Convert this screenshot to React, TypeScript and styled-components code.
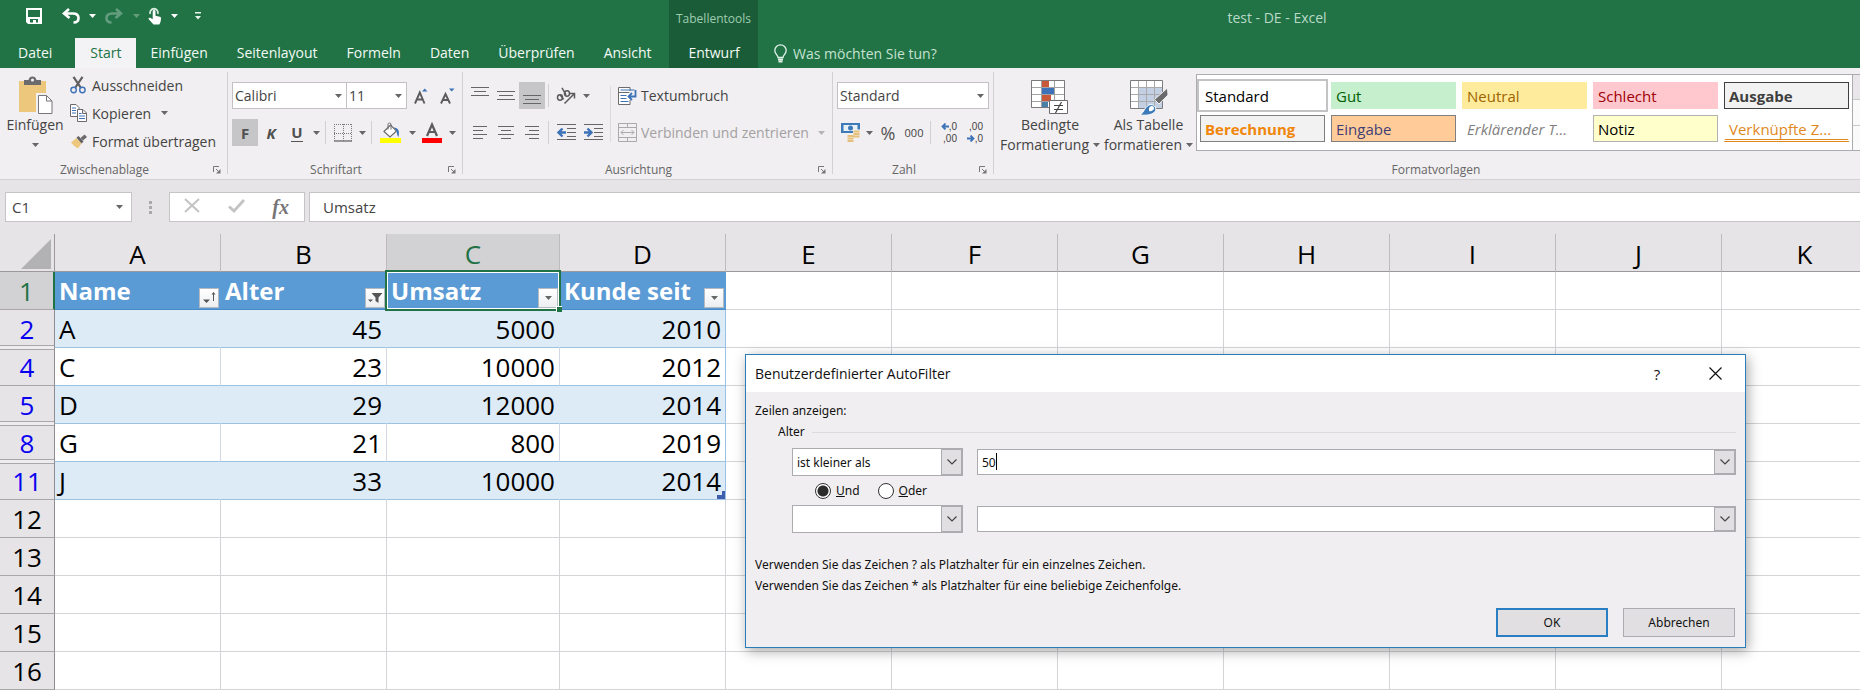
import React from "react";
import styled, { createGlobalStyle, css } from "styled-components";

const GlobalStyle = createGlobalStyle`
  *, *::before, *::after { box-sizing: border-box; }
  body { margin: 0; background: #fff; }
  body, button, input, select {
    font-family: "Open Sans", "Noto Sans", sans-serif;
    font-size: 14px;
  }
  button { border: 0; padding: 0; background: none; color: inherit; cursor: pointer; }
`;

const green = "#217346";
const ink = "#444444";
const line = "#acacb0";

const Window = styled.div`
  position: relative;
  display: flex;
  flex-direction: column;
  height: 100vh;
  overflow: hidden;
  color: ${ink};
`;

/* ---------- title bar and tabs ---------- */

const Header = styled.header`
  display: flex;
  flex: none;
  background: ${green};
  color: #f3faf5;
`;

const HeaderLeft = styled.div`
  width: 669px;
  flex: none;
`;

const QuickAccess = styled.div`
  display: flex;
  align-items: center;
  height: 38px;
  padding: 0 0 6px 14px;
`;

const QuickButton = styled.button<{ $w: number; $dim?: boolean }>`
  display: flex;
  align-items: center;
  justify-content: center;
  width: ${(p) => p.$w}px;
  height: 30px;
  opacity: ${(p) => (p.$dim ? 0.3 : 1)};
`;

const Tabs = styled.nav`
  display: flex;
  height: 30px;
`;

const Tab = styled.button<{ $active?: boolean; $file?: boolean }>`
  height: 30px;
  padding: ${(p) => (p.$file ? "0 23px 0 18px" : "0 14px 0 15px")};
  line-height: 30px;
  white-space: nowrap;
  ${(p) => p.$active && css`
    background: #f3f2f4;
    color: ${green};
  `}
`;

const ContextTab = styled.div`
  display: flex;
  flex-direction: column;
  align-items: center;
  flex: none;
  width: 89px;
  background: #1b5c38;
`;

const ContextTitle = styled.div`
  height: 38px;
  font-size: 12px;
  line-height: 37px;
  color: #9fcdb1;
`;

const HeaderRight = styled.div`
  flex: 1;
  min-width: 0;
`;

const WindowTitle = styled.div`
  height: 38px;
  padding-right: 64px;
  line-height: 36px;
  text-align: center;
  color: #b9dac7;
`;

const TellMe = styled.label`
  display: flex;
  align-items: center;
  gap: 6px;
  height: 30px;
  padding-left: 16px;
`;

const TellMeInput = styled.input`
  width: 200px;
  height: 28px;
  padding: 0;
  border: 0;
  background: none;
  color: #fff;
  &::placeholder { color: #c5e2d0; opacity: 1; }
`;

/* ---------- ribbon ---------- */

const Ribbon = styled.div`
  display: flex;
  flex: none;
  height: 112px;
  overflow: hidden;
  background: #f1eff1;
  border-bottom: 1px solid #d4d2d4;
`;

const Group = styled.section<{ $w?: number }>`
  display: flex;
  flex-direction: column;
  ${(p) => (p.$w ? `width: ${p.$w}px; flex: none;` : "flex: 1; min-width: 0;")}
`;

const GroupDivider = styled.div`
  flex: none;
  width: 1px;
  margin: 4px 0 5px;
  background: #d2d0d2;
`;

const GroupBody = styled.div`
  display: flex;
  height: 92px;
  padding-left: 4px;
`;

const GroupLabel = styled.div<{ $wide?: boolean }>`
  display: flex;
  align-items: center;
  gap: 4px;
  height: 19px;
  padding: 0 6px 0 ${(p) => (p.$wide ? 24 : 0)}px;
  font-size: 12px;
  line-height: 19px;
  color: #666;
  span { flex: 1; text-align: center; }
`;

const Stack = styled.div<{ $grow?: boolean }>`
  display: flex;
  flex-direction: column;
  gap: 10px;
  padding-top: 14px;
  flex: ${(p) => (p.$grow ? 1 : "none")};
`;

const Row = styled.div`
  display: flex;
  align-items: center;
  height: 27px;
`;

const Sep = styled.span`
  width: 1px;
  height: 23px;
  margin: 0 3px;
  background: #d2d0d2;
`;

const TallSep = styled.span`
  width: 1px;
  height: 56px;
  margin: 18px 0 0 4px;
  background: #dddbdd;
`;

const Tool = styled.button<{ $w: number; $on?: boolean }>`
  display: flex;
  align-items: center;
  justify-content: center;
  width: ${(p) => p.$w}px;
  height: 27px;
  background: ${(p) => (p.$on ? "#c6c5c7" : "none")};
`;

const Letter = styled.span<{ $kind: "bold" | "italic" | "underline" }>`
  font-weight: 700;
  font-size: 15px;
  line-height: 20px;
  color: #505050;
  font-style: ${(p) => (p.$kind === "italic" ? "italic" : "normal")};
  ${(p) => p.$kind === "underline" && "border-bottom: 1px solid #555; line-height: 17px;"}
`;

const BigTool = styled.button<{ $w: number; $top: number }>`
  display: flex;
  flex-direction: column;
  align-items: center;
  width: ${(p) => p.$w}px;
  flex: none;
  padding-top: ${(p) => p.$top}px;
  line-height: 20px;
  white-space: nowrap;
`;

const BigToolLine = styled.span`
  display: flex;
  align-items: center;
  gap: 4px;
  height: 20px;
`;

const ClipList = styled.div`
  display: flex;
  flex-direction: column;
  padding: 3px 0 0 4px;
`;

const TextTool = styled.button<{ $h: number; $gap: number; $off?: boolean; $pad?: number }>`
  display: flex;
  align-items: center;
  gap: ${(p) => p.$gap}px;
  height: ${(p) => p.$h}px;
  padding-left: ${(p) => p.$pad ?? 0}px;
  white-space: nowrap;
  color: ${(p) => (p.$off ? "#a3a1a3" : ink)};
`;

const ArrowGap = styled.span`
  display: flex;
  padding-left: 5px;
`;

const ComboBox = styled.span<{ $w: number; $joined?: boolean }>`
  position: relative;
  display: flex;
  width: ${(p) => p.$w}px;
  height: 27px;
  margin-left: ${(p) => (p.$joined ? -1 : 0)}px;
  border: 1px solid #c3c1c3;
  background: #fff;
  select {
    flex: 1;
    appearance: none;
    border: 0;
    padding: 0 18px 0 2px;
    background: none;
    color: ${ink};
  }
  svg {
    position: absolute;
    right: 4px;
    top: 11px;
    pointer-events: none;
  }
`;

const Gallery = styled.div`
  display: flex;
  height: 77px;
  flex: none;
  margin: 6px 0 0 1px;
  border: 1px solid ${line};
  background: #fff;
`;

const GalleryGrid = styled.div`
  display: grid;
  grid-template-columns: repeat(5, 125px);
  grid-template-rows: 27px 27px;
  gap: 6px;
  padding: 7px 3px;
`;

const GalleryScroll = styled.div`
  display: flex;
  flex-direction: column;
  width: 24px;
  border-left: 1px solid ${line};
  button { flex: 1; background: #fbfafb; }
  button:first-child { background: #e8e6e8; }
  button + button { border-top: 1px solid #c9c7c9; }
`;

const StyleCell = styled.button<{
  $bg?: string; $fg: string; $border?: string; $bold?: boolean;
  $italic?: boolean; $selected?: boolean; $linked?: boolean;
}>`
  padding: 0 0 0 4px;
  text-align: left;
  font-size: 15px;
  line-height: 20px;
  white-space: nowrap;
  border: 1px solid ${(p) => p.$border ?? p.$bg ?? "#fff"};
  background: ${(p) => p.$bg ?? "#fff"};
  color: ${(p) => p.$fg};
  font-weight: ${(p) => (p.$bold ? 700 : 400)};
  font-style: ${(p) => (p.$italic ? "italic" : "normal")};
  ${(p) => p.$selected && "outline: 2px solid #c3c2c4; outline-offset: 1px;"}
  ${(p) => p.$linked && "padding-top: 2px; border-bottom: 3px double #e0881c;"}
`;

const PercentFace = styled.span`
  font-size: 18px;
  line-height: 20px;
  color: #555;
`;

const ThousandsFace = styled.span`
  font-size: 11px;
  line-height: 20px;
`;

const DecimalFace = styled.span`
  display: grid;
  justify-items: end;
  width: 18px;
  font-family: "Liberation Sans", sans-serif;
  font-size: 10px;
  line-height: 12px;
  span { display: flex; align-items: center; }
`;

/* ---------- formula bar ---------- */

const FormulaBar = styled.div`
  display: flex;
  flex: none;
  height: 54px;
  padding: 12px 0 12px 5px;
  background: #e6e4e6;
`;

const Field = styled.div<{ $w?: number }>`
  display: flex;
  align-items: center;
  border: 1px solid #c6c4c6;
  background: #fff;
  ${(p) => (p.$w ? `width: ${p.$w}px; flex: none;` : "flex: 1;")}
  input {
    flex: 1;
    min-width: 0;
    height: 26px;
    padding: 0 0 0 6px;
    border: 0;
    font-size: 15px;
    color: ${ink};
  }
`;

const NameArrow = styled.button`
  display: flex;
  padding: 8px;
`;

const Grip = styled.div`
  display: flex;
  flex-direction: column;
  justify-content: center;
  align-items: center;
  gap: 2px;
  width: 37px;
  i { width: 3px; height: 3px; background: #aaa8aa; }
`;

const FormulaTools = styled(Field)`
  justify-content: space-between;
  padding: 0 15px 0 14px;
  margin-right: 4px;
`;

const FormulaField = styled(Field)`
  border-right: 0;
  padding-left: 7px;
`;

const Fx = styled.span`
  font-family: "Liberation Serif", serif;
  font-style: italic;
  font-weight: 700;
  font-size: 20px;
  line-height: 26px;
  color: #777577;
`;

/* ---------- sheet ---------- */

const SheetArea = styled.div`
  flex: 1;
  min-height: 0;
  overflow: hidden;
`;

const Sheet = styled.table`
  table-layout: fixed;
  width: 1888px;
  border-collapse: separate;
  border-spacing: 0;
  font-size: 26px;
  line-height: 36px;
  color: #000;
`;

const HeadCol = styled.col`
  width: 55px;
`;

const DataCol = styled.col<{ $wide?: boolean }>`
  width: ${(p) => (p.$wide ? 173 : 166)}px;
`;

const SheetRow = styled.tr`
  height: 38px;
`;

const ColHead = styled.th<{ $on?: boolean }>`
  height: 38px;
  padding: 3px 0 0;
  line-height: 34px;
  font-weight: 400;
  border-right: 1px solid #bdbbbd;
  border-bottom: 1px solid #9b999b;
  background: ${(p) => (p.$on ? "#d2d1d3" : "#e6e4e6")};
  color: ${(p) => (p.$on ? green : "#000")};
`;

const Corner = styled(ColHead)`
  border-right-color: #9b999b;
  svg { display: block; margin: 0 3px 0 auto; }
`;

const RowHead = styled.th<{ $on?: boolean; $filtered?: boolean; $hiddenBelow?: boolean }>`
  position: relative;
  padding: 0;
  font-weight: 400;
  border-right: ${(p) => (p.$on ? `2px solid ${green}` : "1px solid #8f8d8f")};
  border-bottom: 1px solid #a9a7a9;
  background: ${(p) => (p.$on ? "#d2d1d3" : "#e6e4e6")};
  color: ${(p) => (p.$on ? green : p.$filtered ? "#0a00f0" : "#000")};
  ${(p) => p.$hiddenBelow && css`
    &::after {
      content: "";
      position: absolute;
      z-index: 1;
      left: 0;
      right: 0;
      bottom: -3px;
      height: 5px;
      border: 1px solid #a9a7a9;
      border-width: 1px 0;
      background: #eeecee;
    }
  `}
`;

const Cell = styled.td<{ $kind?: "band" | "plain"; $num?: boolean; $last?: boolean }>`
  position: relative;
  padding: 0 4px;
  border-right: 1px solid #d4d3d8;
  border-bottom: 1px solid #d4d3d8;
  text-align: ${(p) => (p.$num ? "right" : "left")};
  ${(p) => p.$kind && css`
    border-bottom-color: #9bc2e0;
    border-right-color: ${p.$last ? "#9bc2e6" : p.$kind === "band" ? "#ddebf7" : "#d4d8e4"};
    background: ${p.$kind === "band" ? "#ddebf7" : "#fff"};
  `}
`;

const TableHead = styled.th<{ $selected?: boolean }>`
  position: relative;
  padding: 0 1px 0 4px;
  border-right: 1px solid #5b9bd5;
  border-bottom: 1px solid #4a8ac6;
  background: #5b9bd5;
  color: #fff;
  font-size: 24px;
  text-align: left;
  ${(p) => p.$selected && css`
    &::before {
      content: "";
      position: absolute;
      z-index: 1;
      inset: -2px -2px -2px -2px;
      border: 2px solid ${green};
      box-shadow: inset 0 0 0 1px #fff;
      pointer-events: none;
    }
    &::after {
      content: "";
      position: absolute;
      z-index: 2;
      right: -3px;
      bottom: -3px;
      width: 6px;
      height: 6px;
      border: 1px solid #fff;
      border-width: 1px 0 0 1px;
      background: ${green};
    }
  `}
`;

const HeadInner = styled.div`
  display: flex;
  justify-content: space-between;
  align-items: flex-end;
  height: 37px;
  line-height: 36px;
  white-space: nowrap;
`;

const FilterButton = styled.button`
  display: flex;
  align-items: center;
  justify-content: center;
  flex: none;
  width: 20px;
  height: 20px;
  margin-bottom: 1px;
  border: 1px solid #b5b9c0;
  background: linear-gradient(#fff, #eceef1);
`;

const TableCorner = styled.svg`
  position: absolute;
  right: 0;
  bottom: 0;
`;

/* ---------- dialog ---------- */

const Dialog = styled.div`
  position: absolute;
  z-index: 5;
  top: 354px;
  left: 745px;
  right: 114px;
  border: 1px solid #2a7db8;
  background: #f0eef0;
  box-shadow: 2px 3px 12px rgba(0, 0, 0, 0.35);
  color: #111;
  font-family: "Noto Sans", "Open Sans", sans-serif;
  font-size: 12px;
  line-height: 20px;
  button, input, select { font-family: inherit; font-size: 12px; }
`;

const DialogTitle = styled.div`
  display: flex;
  align-items: center;
  height: 37px;
  padding-left: 9px;
  background: #fff;
  font-family: "Open Sans", "Noto Sans", sans-serif;
  h2 { flex: 1; margin: 0; font-size: 14px; font-weight: 400; }
`;

const TitleButton = styled.button<{ $w: number }>`
  display: flex;
  align-items: center;
  justify-content: center;
  width: ${(p) => p.$w}px;
  height: 30px;
  && { font-size: 15px; }
`;

const DialogBody = styled.div`
  padding: 9px 9px 10px;
`;

const Fieldset = styled.div`
  padding-left: 23px;
`;

const Legend = styled.div`
  display: flex;
  align-items: center;
  gap: 7px;
  padding-top: 1px;
  &::after { content: ""; flex: 1; height: 1px; background: #dcdadc; }
`;

const Conditions = styled.div`
  padding: 6px 0 0 14px;
`;

const Condition = styled.div`
  display: flex;
  align-items: center;
  gap: 14px;
  height: 28px;
`;

const DropSelect = styled.span`
  position: relative;
  display: flex;
  flex: none;
  width: 171px;
  height: 28px;
  border: 1px solid ${line};
  background: #fff;
  select {
    flex: 1;
    appearance: none;
    border: 0;
    padding: 0 24px 0 4px;
    background: none;
    color: #111;
  }
`;

const dropBox = css`
  display: flex;
  align-items: center;
  justify-content: center;
  width: 21px;
  border: 1px solid ${line};
  background: #e1dfe1;
`;

const DropFace = styled.span`
  ${dropBox}
  position: absolute;
  top: 0;
  right: 0;
  bottom: 0;
  pointer-events: none;
`;

const DropInput = styled.span`
  position: relative;
  display: flex;
  flex: 1;
  height: 26px;
  border: 1px solid ${line};
  background: #fff;
  input { flex: 1; min-width: 0; padding: 0 0 0 4px; border: 0; background: none; color: #111; }
  button { ${dropBox} }
`;

const TextCaret = styled.i`
  position: absolute;
  left: 18px;
  top: 3px;
  width: 1px;
  height: 17px;
  background: #000;
`;

const Radios = styled.div`
  display: flex;
  align-items: center;
  gap: 18px;
  height: 29px;
  padding-left: 23px;
  label { display: flex; align-items: center; gap: 5px; }
`;

const Radio = styled.input`
  appearance: none;
  width: 16px;
  height: 16px;
  margin: 0;
  border: 1px solid #333;
  border-radius: 50%;
  background: #fff;
  &:checked { background: radial-gradient(circle, #2b2b2b 0 5px, #fff 6px); }
`;

const Hints = styled.div`
  padding-top: 21px;
  p { margin: 0; line-height: 21px; }
`;

const DialogButtons = styled.div`
  display: flex;
  justify-content: flex-end;
  gap: 15px;
  padding: 12px 1px 0 0;
`;

const DialogButton = styled.button<{ $primary?: boolean }>`
  width: 112px;
  height: 29px;
  border: ${(p) => (p.$primary ? "2px solid #2a7fc4" : `1px solid ${line}`)};
  background: #e1dfe1;
`;

/* ---------- icons ---------- */

const Down = ({ color = "#666" }: { color?: string }) => (
  <svg width="7" height="4" viewBox="0 0 7 4" fill={color}><path d="M0 0h7L3.500 4z" /></svg>
);

const Chevron = () => (
  <svg width="10" height="6" viewBox="0 0 10 6" fill="none" stroke="#444" strokeWidth="1.200">
    <path d="M.5.5 5 5 9.500.5" />
  </svg>
);

const Launcher = () => (
  <svg width="8" height="8" viewBox="0 0 8 8" fill="none" stroke="#777">
    <path d="M.5 6V.5H6M3 3l3 3" /><path d="M7.500 3v4.500H3z" fill="#777" stroke="none" />
  </svg>
);

const SaveIcon = () => (
  <svg width="16" height="16" viewBox="0 0 16 16">
    <path d="M0 0h16v16H2l-2-2z" fill="#fff" />
    <path d="M2 2h12v7H2zM4 11h8v3.500h-2V12H7v2.500H4z" fill={green} />
  </svg>
);

const UndoIcon = () => (
  <svg width="18" height="16" viewBox="0 0 18 16" fill="none" stroke="#fff" strokeWidth="2.600">
    <path d="M7 1 2 5.500 7.500 10M2.500 5.500H11c3.500 0 5.500 1.800 5.500 4.500S14.500 14.500 11.500 14.500" />
  </svg>
);

const RedoIcon = () => (
  <svg width="18" height="16" viewBox="0 0 18 16" fill="none" stroke="#fff" strokeWidth="2.600">
    <path d="M11 1l5 4.500L10.500 10M15.500 5.500H7C3.500 5.500 1.500 7.300 1.500 10S3.500 14.500 6.500 14.500" />
  </svg>
);

const TouchIcon = () => (
  <svg width="14" height="18" viewBox="0 0 14 18">
    <path d="M2.200 7A4 4 0 1 1 9.800 7" fill="none" stroke="#d9eade" strokeWidth="1.800" />
    <path d="M4.700 4.500a1.400 1.400 0 0 1 2.800 0v4.200l4.300 1c1 .3 1.400.9 1.300 1.900l-.6 3.400-1.200 2.500H5.500L.7 12.300c-.6-1 .4-2 1.500-1.500l2.500 1.400z" fill="#fff" />
  </svg>
);

const CustomizeIcon = () => (
  <svg width="6" height="8" viewBox="0 0 6 8" fill="#e8f3ec"><path d="M0 0h6v1.400H0zM0 4h6L3 7.500z" /></svg>
);

const BulbIcon = () => (
  <svg width="13" height="19" viewBox="0 0 13 19" fill="none" stroke="#e2f1e8" strokeWidth="1.300">
    <path d="M4 13.500c0-2.500-3.200-3.600-3.200-7a5.700 5.700 0 0 1 11.400 0c0 3.400-3.200 4.500-3.200 7z" />
    <path d="M4 15.500h5M4.500 17.700h4" strokeWidth="1.800" />
  </svg>
);

const PasteIcon = () => (
  <svg width="35" height="39" viewBox="0 0 35 39">
    <path d="M1 5h27v31H1z" fill="#edc77c" />
    <path d="M6 9V4h4.500C11 1.500 12.500.5 14.500.5S18 1.500 18.500 4H23v5z" fill="#6b6a6c" />
    <circle cx="14.500" cy="4" r="1.600" fill="#f1eff1" />
    <path d="M19.500 18.500h9l6 6V38.500h-15z" fill="#fff" stroke="#f1eff1" strokeWidth="3" />
    <path d="M20.500 19.500h8l5.500 5.500v12.500H20.500zM28.500 19.500V25H34" fill="#fff" stroke="#777" />
  </svg>
);

const CutIcon = () => (
  <svg width="16" height="18" viewBox="0 0 16 18" fill="none">
    <path d="M3.500.8 11 12M12.500.8 5 12" stroke="#5f5e60" strokeWidth="2.200" />
    <circle cx="3.600" cy="14" r="2.700" stroke="#3d72b8" strokeWidth="1.400" />
    <circle cx="12.400" cy="14" r="2.700" stroke="#3d72b8" strokeWidth="1.400" />
  </svg>
);

const CopyIcon = () => (
  <svg width="17" height="18" viewBox="0 0 17 18" fill="#fff" stroke="#6b6a6c">
    <path d="M.5.5h5.500l3 3v9h-8.500z" />
    <path d="M2 4h4M2 6.500h4M2 9h4" stroke="#3d72b8" />
    <path d="M7.500 5.500h5.500l3.500 3.500v8.500h-9zM12.500 5.500V9.500h4" />
    <path d="M9 9.500h2.500M9 12h6M9 14.500h6" stroke="#3d72b8" />
  </svg>
);

const BrushIcon = () => (
  <svg width="17" height="15" viewBox="0 0 17 15">
    <path d="M1 8.500 6.500 4l5 5.500L8 14.500C5.500 13 3 11 1 8.500z" fill="#edc77c" />
    <path d="m6.500 3.500 2-1.500 5 5.500-2 2z" fill="#5f5e60" />
    <path d="m10.500 4 4-3.500L17 3l-4 3.500z" fill="#6b6a6c" />
  </svg>
);

const FontSizeIcon = ({ up }: { up?: boolean }) => (
  <svg width="16" height="18" viewBox="0 0 16 18">
    <path d={up ? "M2 16.500 6.800 5.500 11.500 16.500M3.800 12.500h6" : "M2 16.500 6.500 7 11 16.500M3.800 13h5.500"} fill="none" stroke="#5b5a5c" strokeWidth="1.900" />
    <path d={up ? "M9 4.500 11.800 1.500 14.500 4.500z" : "M10 1.500h5.500L12.700 4.500z"} fill="#3d72b8" />
  </svg>
);

const BordersIcon = () => (
  <svg width="18" height="18" viewBox="0 0 18 18" fill="none" stroke="#7a797b">
    <path d="M0 .5h18M.5 0v18M17.500 0v18M9.500 0v18M0 9.500h18" strokeDasharray="1 1" />
    <path d="M0 17h18" strokeWidth="1.500" />
  </svg>
);

const FillIcon = () => (
  <svg width="21" height="21" viewBox="0 0 21 21">
    <path d="M4 9.500 10.500 3l6 6-6.500 6z" fill="#fff" stroke="#6b6a6c" strokeWidth="1.200" />
    <path d="M8 7.500V2.500C8 .5 11 .5 11 2.500v5" fill="none" stroke="#6b6a6c" />
    <path d="M14 5.500c4 .2 6 3 4.500 9.500-1.500-1.500-1.500-4-2-6z" fill="#3d72b8" />
    <path d="M0 16h21v5H0z" fill="#ffff00" />
  </svg>
);

const FontColorIcon = () => (
  <svg width="20" height="21" viewBox="0 0 20 21">
    <path d="M5 14 10 2.500 15 14M6.800 10h6.500" fill="none" stroke="#5b5a5c" strokeWidth="2.200" />
    <path d="M0 16h20v5H0z" fill="#ff0000" />
  </svg>
);

const LinesIcon = ({ rows, w = 18, h = 18 }: { rows: [number, number, number][]; w?: number; h?: number }) => (
  <svg width={w} height={h} viewBox={`0 0 ${w} ${h}`} stroke="#666" fill="none">
    {rows.map(([x, y, len]) => <path key={y} d={`M${x} ${y}.5h${len}`} />)}
  </svg>
);

const IndentIcon = ({ out }: { out?: boolean }) => (
  <svg width="19" height="17" viewBox="0 0 19 17" fill="none" stroke="#666">
    <path d="M0 .5h19M10 4.500h9M10 8.500h9M10 12.500h9M0 15.500h19" />
    <path d={out ? "M9 8.500H2M5.500 4.500 1.500 8.500l4 4" : "M0 8.500h7M3.500 4.500l4 4-4 4"} stroke="#3d72b8" strokeWidth="2.400" />
  </svg>
);

const OrientationIcon = () => (
  <svg width="20" height="18" viewBox="0 0 20 18" fill="none" stroke="#5b5a5c" strokeWidth="1.500">
    <ellipse cx="4" cy="10.500" rx="2.500" ry="2.700" /><path d="m4 7.500 3.500 5" />
    <ellipse cx="11" cy="6.500" rx="2.500" ry="2.700" /><path d="m6 .8 4 7" />
    <path d="M8.500 16.500 18 7M13.500 6.500H18.500V11.500" />
  </svg>
);

const WrapIcon = () => (
  <svg width="19" height="18" viewBox="0 0 19 18" fill="none" stroke="#6b6a6c">
    <path d="M12 4V.5H.5v17H12V13" fill="#fff" /><path d="M.5 5.500h11" />
    <path d="M2.500 3h14M2.500 8.500h6M2.500 11.500h6M2.500 14.500h8" stroke="#3d72b8" />
    <path d="M17.500 3v6.500H11M14 6l-3.500 3.500L14 13" stroke="#3d72b8" strokeWidth="1.800" />
  </svg>
);

const MergeIcon = () => (
  <svg width="19" height="19" viewBox="0 0 19 19" fill="none" stroke="#aaa9ab">
    <path d="M.5.5h18v18H.5zM.5 4.500h18M.5 14.500h18M9.500.5v4M9.500 14.500v4M3 9.500h13M5.500 7 3 9.500 5.500 12M13.500 7 16 9.500 13.500 12" />
  </svg>
);

const CurrencyIcon = () => (
  <svg width="19" height="19" viewBox="0 0 19 19">
    <path d="M0 0h19v10H0z" fill="#3d7ab8" />
    <path d="M2.500 2h14v6h-14z" fill="#e9f1f8" /><circle cx="9.500" cy="5" r="2.500" fill="#3d7ab8" />
    <path d="M12 6.500h7V15h-7zM6 11.500h7V19H6z" fill="#f1eff1" />
    <path d="M12.500 8.500h6M12.500 11h6M12.500 13.500h6M6.500 13h6M6.500 15.500h6M6.500 18h6" stroke="#e6bf78" strokeWidth="1.800" />
  </svg>
);

const BlueArrow = ({ left }: { left?: boolean }) => (
  <svg width="8" height="7" viewBox="0 0 8 7" fill="none" stroke="#3d72b8" strokeWidth="1.800">
    <path d={left ? "M8 3.500H2M4.500.5 1.500 3.500l3 3" : "M0 3.500h6M3.500.5l3 3-3 3"} />
  </svg>
);

const CondIcon = () => (
  <svg width="38" height="35" viewBox="0 0 38 35">
    <path d="M.5.5h33v27H.5z" fill="#fff" />
    <path d="M11 1h7v7h-7z" fill="#c9583a" /><path d="M11 8h12v6H11z" fill="#3d72b8" />
    <path d="M11 15h9v6h-9z" fill="#c9583a" /><path d="M11 22h6v6h-6z" fill="#4a7fa8" />
    <path d="M.5.5h33v27H.5zM.5 7.500h33M.5 14.500h33M.5 21.500h33M10.500.5v27M23.500.5v27" fill="none" stroke="#a2a1a3" />
    <path d="M.5.5h33v27H.5z" fill="none" stroke="#7b7a7c" />
    <path d="M18.500 20.500h18v13h-18z" fill="#fff" stroke="#6b6a6c" />
    <path d="M23 25.500h9M23 29.500h9M30.500 22l-6 11" stroke="#444" strokeWidth="1.200" />
  </svg>
);

const TableIcon = () => (
  <svg width="38" height="35" viewBox="0 0 38 35">
    <path d="M.5.5h32v28H.5z" fill="#fff" />
    <path d="M9 8h24v20H9z" fill="#c3d0e3" />
    <path d="M.5 7.500h32M.5 14.500h32M.5 21.500h32M8.500.5v28M16.500.5v28M24.500.5v28" stroke="#a9a8ab" />
    <path d="M.5.5h32v28H.5z" fill="none" stroke="#7b7a7c" />
    <path d="M37.500 8 38 15l-9 9-4.500-4.500z" fill="#6b6a6c" stroke="#f1eff1" />
    <path d="M10 35c4-2 5-10 11-10.500 4 .5 6 4 4 7-3 4-10 4-15 3.500z" fill="#3d7ab8" stroke="#fff" />
    <path d="M19 28c2-3 5-2 5 0s-3 4-5 3z" fill="#fff" />
  </svg>
);

const CancelIcon = () => (
  <svg width="16" height="15" viewBox="0 0 16 15" fill="none" stroke="#c4c2c4" strokeWidth="2"><path d="m1 1 14 13M15 1 1 14" /></svg>
);
const CheckIcon = () => (
  <svg width="17" height="14" viewBox="0 0 17 14" fill="none" stroke="#c4c2c4" strokeWidth="2.800"><path d="M1 7.500 6 12 16 1" /></svg>
);
const CloseIcon = () => (
  <svg width="13" height="13" viewBox="0 0 13 13" fill="none" stroke="#111" strokeWidth="1.200"><path d="m.5.5 12 12M12.500.5l-12 12" /></svg>
);
const CornerIcon = () => (
  <svg width="30" height="30" viewBox="0 0 30 30"><path d="M30 0v30H0z" fill="#b2b1b3" /></svg>
);

const FilterGlyph = ({ kind }: { kind: "drop" | "sort" | "filter" }) => {
  if (kind === "drop") return <Down />;
  return (
    <svg width="16" height="14" viewBox="0 0 16 14" fill="#555">
      {kind === "sort" ? (
        <>
          <path d="M2 8.500h7L5.500 12z" />
          <path d="m12.500 1-2 2.500H12V10h1V3.500h1.500z" />
        </>
      ) : (
        <>
          <path d="M1 8.500h5L3.500 11z" />
          <path d="M4.500 2h11l-4 4.500V12L8.500 10V6.500z" />
        </>
      )}
    </svg>
  );
};

/* ---------- data ---------- */

const tabs = ["Einfügen", "Seitenlayout", "Formeln", "Daten", "Überprüfen", "Ansicht"];
const columns = ["A", "B", "C", "D", "E", "F", "G", "H", "I", "J", "K"];
const extra = columns.slice(4);

const heads: { name: string; kind: "drop" | "sort" | "filter" }[] = [
  { name: "Name", kind: "sort" },
  { name: "Alter", kind: "filter" },
  { name: "Umsatz", kind: "drop" },
  { name: "Kunde seit", kind: "drop" },
];

const people = [
  { row: 2, values: ["A", 45, 5000, 2010], hiddenBelow: true },
  { row: 4, values: ["C", 23, 10000, 2012] },
  { row: 5, values: ["D", 29, 12000, 2014], hiddenBelow: true },
  { row: 8, values: ["G", 21, 800, 2019], hiddenBelow: true },
  { row: 11, values: ["J", 33, 10000, 2014] },
];

const emptyRows = [12, 13, 14, 15, 16];

const Combo = ({ label, value, w, joined }: { label: string; value: string; w: number; joined?: boolean }) => (
  <ComboBox $w={w} $joined={joined}>
    <select aria-label={label} defaultValue={value}><option>{value}</option></select>
    <Down />
  </ComboBox>
);

const Label = ({ children, launcher = true }: { children: string; launcher?: boolean }) => (
  <GroupLabel $wide={!launcher}><span>{children}</span>{launcher && <Launcher />}</GroupLabel>
);

const DropTool = ({ label, w }: { label: string; w: number }) => (
  <Tool $w={w} aria-label={label}><Down /></Tool>
);

const TopBar = () => (
  <Header>
    <HeaderLeft>
      <QuickAccess>
        <QuickButton $w={40} aria-label="Speichern"><SaveIcon /></QuickButton>
        <QuickButton $w={34} aria-label="Rückgängig"><UndoIcon /></QuickButton>
        <QuickButton $w={8} aria-label="Rückgängig Optionen"><Down color="#fff" /></QuickButton>
        <QuickButton $w={36} $dim aria-label="Wiederholen"><RedoIcon /></QuickButton>
        <QuickButton $w={8} $dim aria-label="Wiederholen Optionen"><Down color="#fff" /></QuickButton>
        <QuickButton $w={30} aria-label="Touchmodus"><TouchIcon /></QuickButton>
        <QuickButton $w={8} aria-label="Touchmodus Optionen"><Down color="#fff" /></QuickButton>
        <QuickButton $w={40} aria-label="Symbolleiste anpassen"><CustomizeIcon /></QuickButton>
      </QuickAccess>
      <Tabs>
        <Tab $file>Datei</Tab>
        <Tab $active>Start</Tab>
        {tabs.map((t) => <Tab key={t}>{t}</Tab>)}
      </Tabs>
    </HeaderLeft>
    <ContextTab>
      <ContextTitle>Tabellentools</ContextTitle>
      <Tab>Entwurf</Tab>
    </ContextTab>
    <HeaderRight>
      <WindowTitle>test - DE - Excel</WindowTitle>
      <TellMe>
        <BulbIcon />
        <TellMeInput aria-label="Was möchten Sie tun?" placeholder="Was möchten Sie tun?" />
      </TellMe>
    </HeaderRight>
  </Header>
);

const RibbonBar = () => (
  <Ribbon>
    <Group $w={227}>
      <GroupBody>
        <BigTool $w={62} $top={8}>
          <PasteIcon />
          <span>Einfügen</span>
          <BigToolLine><Down /></BigToolLine>
        </BigTool>
        <ClipList>
          <TextTool $h={28} $gap={6}><CutIcon />Ausschneiden</TextTool>
          <TextTool $h={28} $gap={5}><CopyIcon />Kopieren<ArrowGap><Down /></ArrowGap></TextTool>
          <TextTool $h={28} $gap={5}><BrushIcon />Format übertragen</TextTool>
        </ClipList>
      </GroupBody>
      <Label>Zwischenablage</Label>
    </Group>
    <GroupDivider />
    <Group $w={234}>
      <GroupBody>
        <Stack>
          <Row>
            <Combo label="Schriftart" value="Calibri" w={115} />
            <Combo label="Schriftgrad" value="11" w={61} joined />
            <Tool $w={28} aria-label="Schrift vergrößern"><FontSizeIcon up /></Tool>
            <Tool $w={24} aria-label="Schrift verkleinern"><FontSizeIcon /></Tool>
          </Row>
          <Row>
            <Tool $w={26} $on><Letter $kind="bold">F</Letter></Tool>
            <Tool $w={26}><Letter $kind="italic">K</Letter></Tool>
            <Tool $w={26}><Letter $kind="underline">U</Letter></Tool>
            <DropTool label="Unterstreichung" w={12} />
            <Sep />
            <Tool $w={27} aria-label="Rahmen"><BordersIcon /></Tool>
            <DropTool label="Rahmen Optionen" w={12} />
            <Sep />
            <Tool $w={31} aria-label="Füllfarbe"><FillIcon /></Tool>
            <DropTool label="Füllfarbe Optionen" w={12} />
            <Tool $w={28} aria-label="Schriftfarbe"><FontColorIcon /></Tool>
            <DropTool label="Schriftfarbe Optionen" w={12} />
          </Row>
        </Stack>
      </GroupBody>
      <Label>Schriftart</Label>
    </Group>
    <GroupDivider />
    <Group $w={369}>
      <GroupBody>
        <Stack>
          <Row>
            <Tool $w={26} aria-label="Oben ausrichten"><LinesIcon rows={[[0, 0, 18], [3, 4, 12], [0, 8, 18]]} /></Tool>
            <Tool $w={26} aria-label="Zentriert ausrichten"><LinesIcon rows={[[0, 4, 18], [2, 8, 14], [0, 12, 18]]} /></Tool>
            <Tool $w={26} $on aria-label="Unten ausrichten"><LinesIcon rows={[[0, 8, 18], [2, 12, 14], [0, 16, 18]]} /></Tool>
            <Sep />
            <Tool $w={28} aria-label="Ausrichtung"><OrientationIcon /></Tool>
            <DropTool label="Ausrichtung Optionen" w={12} />
          </Row>
          <Row>
            <Tool $w={26} aria-label="Linksbündig"><LinesIcon w={14} h={13} rows={[[0, 0, 14], [0, 4, 10], [0, 8, 14], [0, 12, 10]]} /></Tool>
            <Tool $w={26} aria-label="Zentriert"><LinesIcon w={16} h={13} rows={[[0, 0, 16], [3, 4, 10], [0, 8, 16], [3, 12, 10]]} /></Tool>
            <Tool $w={26} aria-label="Rechtsbündig"><LinesIcon w={14} h={13} rows={[[0, 0, 14], [4, 4, 10], [0, 8, 14], [4, 12, 10]]} /></Tool>
            <Sep />
            <Tool $w={28} aria-label="Einzug verkleinern"><IndentIcon out /></Tool>
            <Tool $w={26} aria-label="Einzug vergrößern"><IndentIcon /></Tool>
          </Row>
        </Stack>
        <TallSep />
        <Stack $grow>
          <TextTool $h={27} $gap={4} $pad={7}><WrapIcon />Textumbruch</TextTool>
          <TextTool $h={27} $gap={4} $pad={7} $off><MergeIcon />Verbinden und zentrieren<ArrowGap><Down color="#b5b3b5" /></ArrowGap></TextTool>
        </Stack>
      </GroupBody>
      <Label>Ausrichtung</Label>
    </Group>
    <GroupDivider />
    <Group $w={160}>
      <GroupBody>
        <Stack>
          <Row><Combo label="Zahlenformat" value="Standard" w={152} /></Row>
          <Row>
            <Tool $w={26} aria-label="Buchhaltungszahlenformat"><CurrencyIcon /></Tool>
            <DropTool label="Währung Optionen" w={12} />
            <Tool $w={26}><PercentFace>%</PercentFace></Tool>
            <Tool $w={26}><ThousandsFace>000</ThousandsFace></Tool>
            <Sep />
            <Tool $w={28} aria-label="Dezimalstelle hinzufügen">
              <DecimalFace><span><BlueArrow left />,0</span><span>,00</span></DecimalFace>
            </Tool>
            <Tool $w={24} aria-label="Dezimalstelle löschen">
              <DecimalFace><span>,00</span><span><BlueArrow />,0</span></DecimalFace>
            </Tool>
          </Row>
        </Stack>
      </GroupBody>
      <Label>Zahl</Label>
    </Group>
    <GroupDivider />
    <Group>
      <GroupBody>
        <BigTool $w={104} $top={12}>
          <CondIcon />
          <span>Bedingte</span>
          <BigToolLine>Formatierung<Down /></BigToolLine>
        </BigTool>
        <BigTool $w={93} $top={12}>
          <TableIcon />
          <span>Als Tabelle</span>
          <BigToolLine>formatieren<Down /></BigToolLine>
        </BigTool>
        <Gallery>
          <GalleryGrid>
            <StyleCell $fg="#000" $selected>Standard</StyleCell>
            <StyleCell $fg="#006100" $bg="#c6efce">Gut</StyleCell>
            <StyleCell $fg="#9c6500" $bg="#ffeb9c">Neutral</StyleCell>
            <StyleCell $fg="#9c0006" $bg="#ffc7ce">Schlecht</StyleCell>
            <StyleCell $fg="#3f3f3f" $bg="#f2f2f2" $border="#3f3f3f" $bold>Ausgabe</StyleCell>
            <StyleCell $fg="#f0860a" $bg="#f2f2f2" $border="#7f7f7f" $bold>Berechnung</StyleCell>
            <StyleCell $fg="#3f3f76" $bg="#ffcc99" $border="#7f7f7f">Eingabe</StyleCell>
            <StyleCell $fg="#7f7f7f" $italic>Erklärender T...</StyleCell>
            <StyleCell $fg="#000" $bg="#ffffcc" $border="#b2b2b2">Notiz</StyleCell>
            <StyleCell $fg="#e0881c" $linked>Verknüpfte Z...</StyleCell>
          </GalleryGrid>
          <GalleryScroll>
            <button aria-label="Nach oben" /><button aria-label="Nach unten" /><button aria-label="Weitere" />
          </GalleryScroll>
        </Gallery>
      </GroupBody>
      <Label launcher={false}>Formatvorlagen</Label>
    </Group>
  </Ribbon>
);

const FilterDialog = () => (
  <Dialog role="dialog" aria-labelledby="filter-title">
    <DialogTitle>
      <h2 id="filter-title">Benutzerdefinierter AutoFilter</h2>
      <TitleButton $w={56}>?</TitleButton>
      <TitleButton $w={60} aria-label="Schließen"><CloseIcon /></TitleButton>
    </DialogTitle>
    <DialogBody>
      <div>Zeilen anzeigen:</div>
      <Fieldset role="group" aria-label="Alter">
        <Legend>Alter</Legend>
        <Conditions>
          <Condition>
            <DropSelect>
              <select aria-label="Vergleich 1"><option>ist kleiner als</option></select>
              <DropFace><Chevron /></DropFace>
            </DropSelect>
            <DropInput>
              <input aria-label="Wert 1" defaultValue="50" />
              <TextCaret />
              <button aria-label="Werte 1 anzeigen"><Chevron /></button>
            </DropInput>
          </Condition>
          <Radios>
            <label><Radio type="radio" name="op" defaultChecked /><span><u>U</u>nd</span></label>
            <label><Radio type="radio" name="op" /><span><u>O</u>der</span></label>
          </Radios>
          <Condition>
            <DropSelect>
              <select aria-label="Vergleich 2"><option></option></select>
              <DropFace><Chevron /></DropFace>
            </DropSelect>
            <DropInput>
              <input aria-label="Wert 2" />
              <button aria-label="Werte 2 anzeigen"><Chevron /></button>
            </DropInput>
          </Condition>
        </Conditions>
      </Fieldset>
      <Hints>
        <p>Verwenden Sie das Zeichen ? als Platzhalter für ein einzelnes Zeichen.</p>
        <p>Verwenden Sie das Zeichen * als Platzhalter für eine beliebige Zeichenfolge.</p>
      </Hints>
      <DialogButtons>
        <DialogButton $primary>OK</DialogButton>
        <DialogButton>Abbrechen</DialogButton>
      </DialogButtons>
    </DialogBody>
  </Dialog>
);

const SheetTable = () => (
  <Sheet>
    <colgroup>
      <HeadCol />
      {columns.map((c) => <DataCol key={c} $wide={c === "C"} />)}
    </colgroup>
    <thead>
      <SheetRow>
        <Corner><CornerIcon /></Corner>
        {columns.map((c) => <ColHead key={c} scope="col" $on={c === "C"}>{c}</ColHead>)}
      </SheetRow>
    </thead>
    <tbody>
      <SheetRow>
        <RowHead scope="row" $on>1</RowHead>
        {heads.map((h) => (
          <TableHead key={h.name} $selected={h.name === "Umsatz"}>
            <HeadInner>
              {h.name}
              <FilterButton aria-label={`${h.name} filtern`}><FilterGlyph kind={h.kind} /></FilterButton>
            </HeadInner>
          </TableHead>
        ))}
        {extra.map((c) => <Cell key={c} />)}
      </SheetRow>
      {people.map((p, i) => (
        <SheetRow key={p.row}>
          <RowHead scope="row" $filtered $hiddenBelow={p.hiddenBelow}>{p.row}</RowHead>
          {p.values.map((v, j) => (
            <Cell key={j} $kind={i % 2 ? "plain" : "band"} $num={j > 0} $last={j === 3}>
              {v}
              {p.row === 11 && j === 3 && (
                <TableCorner width="8" height="8" viewBox="0 0 8 8"><path d="M5 0h3v8H0V4h5z" fill="#3f5fae" /></TableCorner>
              )}
            </Cell>
          ))}
          {extra.map((c) => <Cell key={c} />)}
        </SheetRow>
      ))}
      {emptyRows.map((r) => (
        <SheetRow key={r}>
          <RowHead scope="row">{r}</RowHead>
          {columns.map((c) => <Cell key={c} />)}
        </SheetRow>
      ))}
    </tbody>
  </Sheet>
);

export default function App() {
  return (
    <>
      <GlobalStyle />
      <Window>
        <TopBar />
        <RibbonBar />
        <FormulaBar>
          <Field $w={127}>
            <input aria-label="Namenfeld" defaultValue="C1" />
            <NameArrow aria-label="Namen anzeigen"><Down /></NameArrow>
          </Field>
          <Grip><i /><i /><i /></Grip>
          <FormulaTools $w={136}>
            <button aria-label="Abbrechen"><CancelIcon /></button>
            <button aria-label="Eingeben"><CheckIcon /></button>
            <button aria-label="Funktion einfügen"><Fx>fx</Fx></button>
          </FormulaTools>
          <FormulaField><input aria-label="Bearbeitungsleiste" defaultValue="Umsatz" /></FormulaField>
        </FormulaBar>
        <SheetArea><SheetTable /></SheetArea>
        <FilterDialog />
      </Window>
    </>
  );
}
